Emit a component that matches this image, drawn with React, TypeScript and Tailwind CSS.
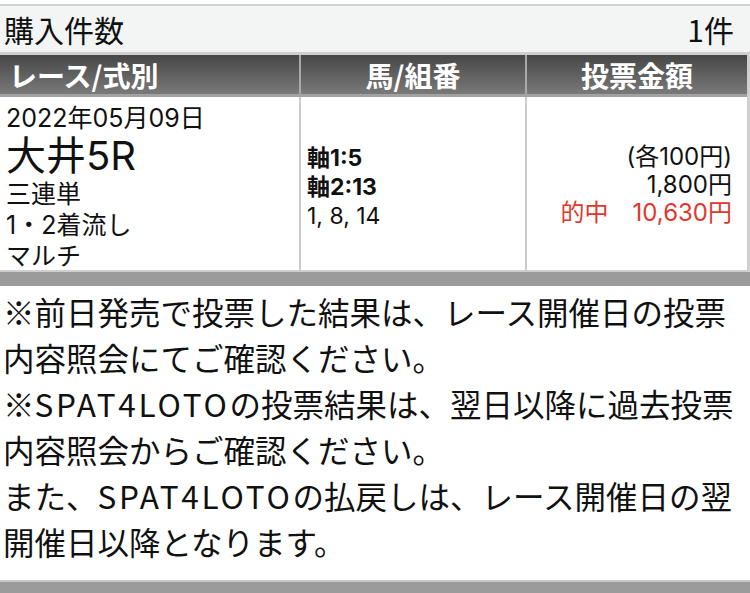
const font = { fontFamily: '"Noto Sans CJK JP", "Noto Sans", sans-serif' };
const mixed = { fontFamily: 'Inter, "Noto Sans CJK JP", sans-serif' };

function Loto() {
  return <span className="tracking-[2.7px]">SPAT4LOTO</span>;
}

export default function App() {
  return (
    <div className="w-[750px] bg-white pt-[4px] text-[#111]" style={font}>
      {/* 購入件数 */}
      <div className="border-t-2 border-b-[3px] border-[#d0d0d0] bg-[#f3f5f5]">
        <div className="flex h-[46px] items-center justify-between pl-[4px] pr-[16px] text-[30px] leading-none">
          <span>購入件数</span>
          <span>1件</span>
        </div>
      </div>

      {/* table */}
      <div className="border-r-[3px] border-[#cfcfcf]">
        <div className="grid h-[42px] grid-cols-[299px_2px_224px_2px_1fr] border-b-[3px] border-[#a2a2a2] bg-gradient-to-b from-[#474747] to-[#7a7a7a] text-[28px] font-bold leading-none text-white">
          <div className="flex items-center pl-[9px]">レース/式別</div>
          <div className="bg-[#a9a9a9]" />
          <div className="flex items-center justify-center">馬/組番</div>
          <div className="bg-[#a9a9a9]" />
          <div className="flex items-center justify-center">投票金額</div>
        </div>

        <div className="grid h-[175px] grid-cols-[299px_2px_224px_2px_1fr] border-b-2 border-[#cfcfcf]" style={mixed}>
          <div className="flex flex-col pl-[6px] pt-[6px]">
            <div className="text-[25px] leading-[30px]">2022年05月09日</div>
            <div className="text-[40px] leading-[46px]">大井5R</div>
            <div className="text-[25px] leading-[31px]">三連単</div>
            <div className="text-[25px] leading-[31px]">1・2着流し</div>
            <div className="text-[25px] leading-[31px]">マルチ</div>
          </div>
          <div className="bg-[#cccccc]" />
          <div className="flex flex-col justify-center pl-[6px] pt-[5px] text-[23px] leading-[29px]">
            <div className="font-bold">軸1:5</div>
            <div className="font-bold">軸2:13</div>
            <div>1, 8, 14</div>
          </div>
          <div className="bg-[#cccccc]" />
          <div className="flex flex-col items-end justify-center pr-[15px] pt-[1px] text-[24px] leading-[28px]">
            <div>(各100円)</div>
            <div>1,800円</div>
            <div className="text-[#e0372d]">的中　10,630円</div>
          </div>
        </div>
      </div>

      <div className="h-[14px] bg-[#9b9b9b]" />

      {/* notes */}
      <div className="whitespace-nowrap pb-[16px] pl-[3px] pt-[2px] text-[31.5px] leading-[46px]">
        <div>※前日発売で投票した結果は、レース開催日の投票</div>
        <div>内容照会にてご確認ください。</div>
        <div>
          ※<Loto />の投票結果は、翌日以降に過去投票
        </div>
        <div>内容照会からご確認ください。</div>
        <div>
          また、<Loto />の払戻しは、レース開催日の翌
        </div>
        <div>開催日以降となります。</div>
      </div>

      <div className="h-[13px] border-t-2 border-[#c8c8c8] bg-[#9b9b9b]" />
    </div>
  );
}
